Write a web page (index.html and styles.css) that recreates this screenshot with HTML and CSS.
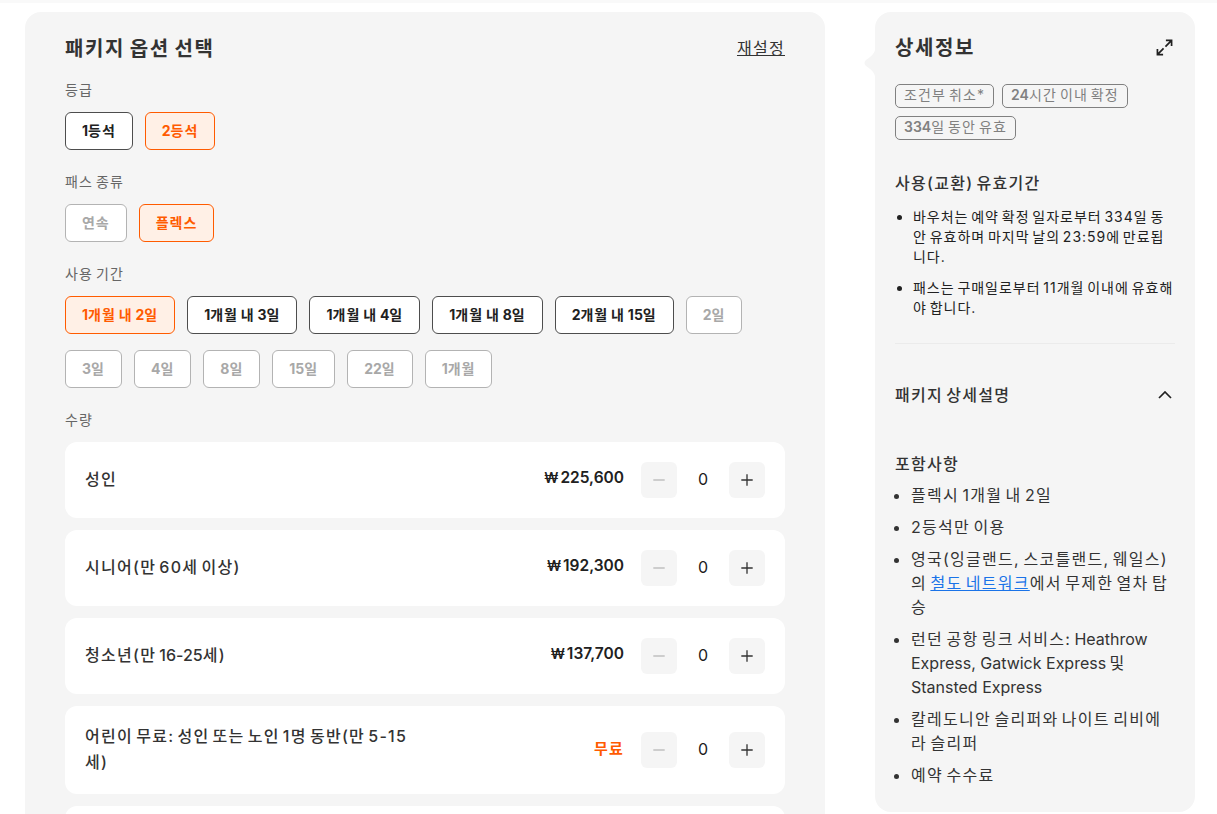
FILE: index.html
```html
<!DOCTYPE html>
<html lang="ko">
<head>
    <meta charset="UTF-8">
    <title>패키지 옵션 선택</title>
    <link rel="stylesheet" href="styles.css">
</head>
<body>
<div class="page">
    <main class="options">
        <div class="options-head">
            <h2>패키지 옵션 선택</h2>
            <a class="reset" href="#">재설정</a>
        </div>

        <div class="group-label">등급</div>
        <div class="chips">
            <button class="chip"><span class="en">1</span>등석</button>
            <button class="chip selected"><span class="en">2</span>등석</button>
        </div>

        <div class="group-label">패스 종류</div>
        <div class="chips">
            <button class="chip off">연속</button>
            <button class="chip selected">플렉스</button>
        </div>

        <div class="group-label">사용 기간</div>
        <div class="chips">
            <button class="chip selected"><span class="en">1</span>개월 내 <span class="en">2</span>일</button>
            <button class="chip"><span class="en">1</span>개월 내 <span class="en">3</span>일</button>
            <button class="chip"><span class="en">1</span>개월 내 <span class="en">4</span>일</button>
            <button class="chip"><span class="en">1</span>개월 내 <span class="en">8</span>일</button>
            <button class="chip"><span class="en">2</span>개월 내 <span class="en">15</span>일</button>
            <button class="chip off"><span class="en">2</span>일</button>
            <button class="chip off"><span class="en">3</span>일</button>
            <button class="chip off"><span class="en">4</span>일</button>
            <button class="chip off"><span class="en">8</span>일</button>
            <button class="chip off"><span class="en">15</span>일</button>
            <button class="chip off"><span class="en">22</span>일</button>
            <button class="chip off"><span class="en">1</span>개월</button>
        </div>

        <div class="group-label">수량</div>
        <div class="rows">
            <div class="row">
                <div class="row-name">성인</div>
                <div class="row-price"><span class="won">₩</span> 225,600</div>
                <div class="stepper">
                    <button class="step minus"><svg viewBox="0 0 16 16"><path d="M1.5 8h13"/></svg></button>
                    <span class="count">0</span>
                    <button class="step"><svg viewBox="0 0 16 16"><path d="M1.5 8h13M8 1.5v13"/></svg></button>
                </div>
            </div>
            <div class="row">
                <div class="row-name">시니어(만 60세 이상)</div>
                <div class="row-price"><span class="won">₩</span> 192,300</div>
                <div class="stepper">
                    <button class="step minus"><svg viewBox="0 0 16 16"><path d="M1.5 8h13"/></svg></button>
                    <span class="count">0</span>
                    <button class="step"><svg viewBox="0 0 16 16"><path d="M1.5 8h13M8 1.5v13"/></svg></button>
                </div>
            </div>
            <div class="row">
                <div class="row-name">청소년(만 <span class="en">16-25</span>세)</div>
                <div class="row-price"><span class="won">₩</span> 137,700</div>
                <div class="stepper">
                    <button class="step minus"><svg viewBox="0 0 16 16"><path d="M1.5 8h13"/></svg></button>
                    <span class="count">0</span>
                    <button class="step"><svg viewBox="0 0 16 16"><path d="M1.5 8h13M8 1.5v13"/></svg></button>
                </div>
            </div>
            <div class="row">
                <div class="row-name">어린이 무료: 성인 또는 노인 1명 동반(만 5-15세)</div>
                <div class="row-price free">무료</div>
                <div class="stepper">
                    <button class="step minus"><svg viewBox="0 0 16 16"><path d="M1.5 8h13"/></svg></button>
                    <span class="count">0</span>
                    <button class="step"><svg viewBox="0 0 16 16"><path d="M1.5 8h13M8 1.5v13"/></svg></button>
                </div>
            </div>
            <div class="row"></div>
        </div>
    </main>

    <aside class="details">
        <svg class="pointer" viewBox="0 0 13 40"><path d="M13 0C13 10 9 13 3 17Q0 20 3 23C9 27 13 30 13 40Z"/></svg>
        <div class="details-head">
            <h2>상세정보</h2>
            <svg class="expand" viewBox="0 0 18 18"><path d="M10.5 1.500h6v6M16.500 1.500l-6.500 6.500M7.500 16.500h-6v-6M1.500 16.500l6.500-6.500"/></svg>
        </div>
        <div class="tags">
            <span class="tag">조건부 취소*</span>
            <span class="tag"><b>24</b>시간 이내 확정</span>
            <span class="tag"><b>334</b>일 동안 유효</span>
        </div>

        <h3 class="validity-title">사용(교환) 유효기간</h3>
        <ul class="validity">
            <li>바우처는 예약 확정 일자로부터 334일 동안 유효하며 마지막 날의 23:59에 만료됩니다.</li>
            <li>패스는 구매일로부터 11개월 이내에 유효해야 합니다.</li>
        </ul>

        <div class="package-head">
            <h3>패키지 상세설명</h3>
            <svg class="chevron" viewBox="0 0 14 8"><path d="M1 7l6-6 6 6"/></svg>
        </div>

        <h4 class="include-title">포함사항</h4>
        <ul class="include">
            <li>플렉시 1개월 내 2일</li>
            <li>2등석만 이용</li>
            <li>영국(잉글랜드, 스코틀랜드, 웨일스)의 <a href="#">철도 네트워크</a>에서 무제한 열차 탑승</li>
            <li>런던 공항 링크 서비스: <span class="en">Heathrow Express, Gatwick Express</span> 및 <span class="en">Stansted Express</span></li>
            <li>칼레도니안 슬리퍼와 나이트 리비에라 슬리퍼</li>
            <li>예약 수수료</li>
        </ul>
    </aside>
</div>
</body>
</html>
```

FILE: styles.css
```css
html, body {
    margin: 0;
    height: 814px;
    overflow: hidden;
}

body {
    font-family: "Inter", "Noto Sans CJK KR", sans-serif;
    background-color: #fff;
    color: #333;
    border-top: 3px solid #f9f9f9;
    box-sizing: border-box;
}

/* the hangul in the reference sets wider than Noto's, so open it up a bit */
body * {
    letter-spacing: .08em;
    word-spacing: -.15em;
}

.page {
    display: flex;
    align-items: flex-start;
    gap: 50px;
    padding: 9px 22px 0 25px;
}

h2, h3, h4 {
    margin: 0;
}

.en {
    letter-spacing: 0;
    word-spacing: 0;
}

/* left panel */
.options {
    width: 720px;
    flex-shrink: 0;
    padding: 19px 40px 40px;
    background-color: #f5f5f5;
    border-radius: 16px;
}

.options-head {
    display: flex;
    justify-content: space-between;
    align-items: center;
    height: 32px;
    margin-bottom: 17px;
}

.options-head h2 {
    font-size: 20px;
    font-weight: 700;
    word-spacing: -.08em;
    color: #333;
}

.reset {
    font-size: 16px;
    color: #333;
}

.group-label {
    font-size: 14px;
    line-height: 20px;
    color: #666;
    margin-bottom: 12px;
}

.chips {
    display: flex;
    flex-wrap: wrap;
    gap: 16px 12px;
    margin-bottom: 22px;
}

.chip {
    height: 38px;
    padding: 0 16px 2px;
    font-family: inherit;
    font-size: 14px;
    font-weight: 700;
    letter-spacing: .07em;
    word-spacing: -.1em;
    color: #212121;
    background-color: #fff;
    border: 1px solid #4d4d4d;
    border-radius: 6px;
}

.chip.selected {
    color: #ff5b00;
    background-color: #fff0e6;
    border-color: #ff5b00;
}

.chip.off {
    color: #a8a8a8;
    border-color: #b3b3b3;
}

.rows {
    display: flex;
    flex-direction: column;
    gap: 12px;
}

.row {
    display: flex;
    align-items: center;
    min-height: 76px;
    padding: 0 20px;
    background-color: #fff;
    border-radius: 12px;
    box-sizing: border-box;
}

.row:nth-child(4) {
    min-height: 88px;
}

.row-name {
    width: 330px;
    margin-bottom: 2px;
    font-size: 16px;
    font-weight: 500;
    line-height: 26px;
    color: #333;
}

.row-price {
    flex: 1;
    margin-bottom: 5px;
    text-align: right;
    font-size: 15.500px;
    font-weight: 600;
    letter-spacing: 0;
    word-spacing: -2px;
    color: #212121;
    white-space: nowrap;
}

.row-price .won {
    font-size: 14px;
    letter-spacing: 0;
}

.row-price.free {
    font-size: 15px;
    letter-spacing: .08em;
    color: #ff5b00;
}

.stepper {
    display: flex;
    align-items: center;
    margin-left: 17px;
}

.step {
    display: flex;
    align-items: center;
    justify-content: center;
    width: 36px;
    height: 36px;
    padding: 0;
    background-color: #f5f5f5;
    border: none;
    border-radius: 6px;
}

.step svg {
    width: 14px;
    height: 14px;
    fill: none;
    stroke: #333;
    stroke-width: 1.500;
}

.step.minus svg {
    stroke: #b8b8b8;
}

.count {
    width: 52px;
    margin-bottom: 2px;
    text-align: center;
    font-size: 16px;
    letter-spacing: 0;
    color: #212121;
}

/* right panel */
.details {
    position: relative;
    width: 320px;
    height: 800px;
    flex-shrink: 0;
    padding: 19px 20px 20px;
    background-color: #f5f5f5;
    border-radius: 16px;
    box-sizing: border-box;
    overflow: visible;
}

.pointer {
    position: absolute;
    left: -12px;
    top: 31px;
    width: 13px;
    height: 40px;
    fill: #f5f5f5;
}

.details-head {
    display: flex;
    justify-content: space-between;
    align-items: center;
    height: 30px;
    margin-bottom: 23px;
}

.details-head h2 {
    font-size: 20px;
    font-weight: 600;
    color: #333;
}

.expand {
    width: 17px;
    height: 17px;
    margin: 2px 2px 0 0;
    fill: none;
    stroke: #212121;
    stroke-width: 1.800;
}

.tags {
    display: flex;
    flex-wrap: wrap;
    gap: 8px;
    margin-bottom: 31px;
}

.tag {
    height: 24px;
    padding: 0 8px;
    font-size: 14px;
    line-height: 20px;
    color: #808080;
    background-color: #f5f5f5;
    border: 1px solid #808080;
    border-radius: 5px;
    box-sizing: border-box;
}

.tag b {
    font-weight: 600;
    letter-spacing: 0;
}

.validity-title, .package-head h3 {
    font-size: 16px;
    font-weight: 500;
    line-height: 24px;
    color: #333;
}

.validity-title {
    margin-bottom: 12px;
}

.validity {
    margin: 0;
    padding: 0 0 25px 18px;
    font-size: 14px;
    line-height: 20px;
    color: #212121;
    border-bottom: 1px solid #ebebeb;
}

.validity li {
    margin-bottom: 11px;
    letter-spacing: .07em;
}

.validity li:last-child {
    margin-bottom: 0;
}

.package-head {
    display: flex;
    justify-content: space-between;
    align-items: center;
    margin-top: 39px;
    margin-bottom: 45px;
}

.chevron {
    width: 14px;
    height: 8px;
    margin-right: 3px;
    fill: none;
    stroke: #212121;
    stroke-width: 1.700;
}

.include-title {
    font-size: 16px;
    font-weight: 500;
    line-height: 24px;
    color: #333;
    margin-bottom: 7px;
}

.include {
    margin: 0;
    padding: 0 0 0 16px;
    font-size: 16px;
    line-height: 24px;
    color: #333;
}

.include li {
    margin-bottom: 8px;
}

.include a {
    color: #1a73e8;
}
```
